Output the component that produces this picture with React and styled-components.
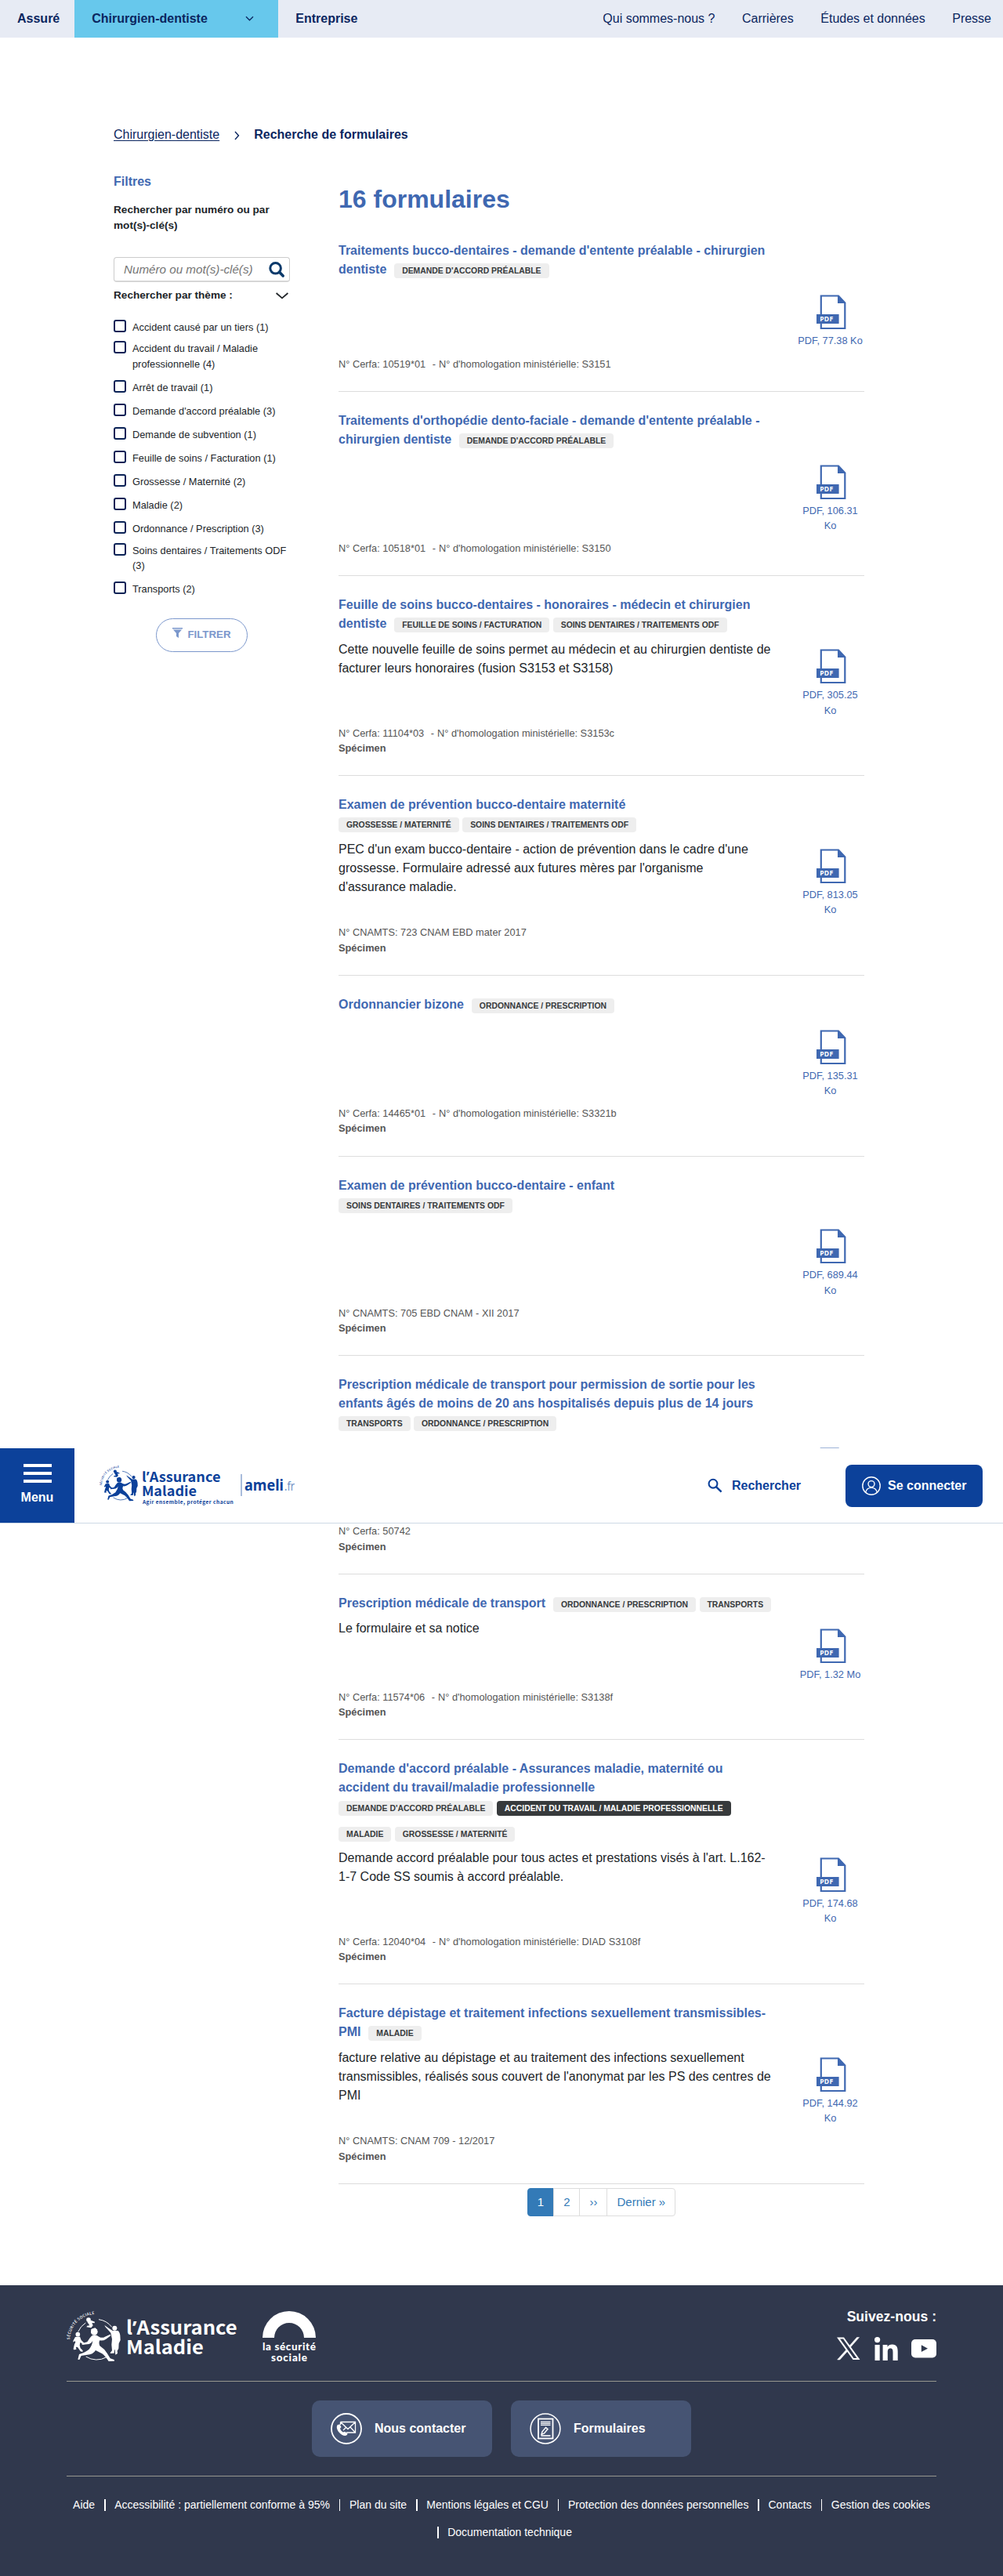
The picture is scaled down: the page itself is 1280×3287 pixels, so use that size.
import React from "react";
import styled, { createGlobalStyle, css } from "styled-components";

const Global = createGlobalStyle`
  * { box-sizing: border-box; }
  body { margin: 0; background: #fff; }
  body, input, button { font-family: "Liberation Sans", Arial, sans-serif; }
  h1, h2, p, ul { margin: 0; padding: 0; }
  ul { list-style: none; }
  a { color: inherit; text-decoration: none; }
  svg { display: block; flex: none; overflow: visible; }
`;

const Page = styled.div`
  position: relative;
  width: 1280px;
  height: 3287px;
  display: flex;
  flex-direction: column;
  color: #212529;
  font-size: 16px;
  line-height: 24px;
`;

/* ---------- top bar ---------- */
const TopBar = styled.nav`
  height: 48px;
  background: #e7ebf4;
  color: #0b2660;
  display: flex;
  align-items: stretch;
  justify-content: space-between;
  padding-right: 15px;
`;
const Audiences = styled.div`
  display: flex;
  font-weight: 700;
`;
const Audience = styled.a`
  display: flex;
  align-items: center;
  justify-content: space-between;
  padding: 0 22px 1px 22px;
  ${(p) =>
    p.$active &&
    css`
      width: 260px;
      padding-right: 31px;
      margin-left: -3px;
      background: #67c8ec;
    `}
`;
const SiteLinks = styled.div`
  display: flex;
  align-items: center;
  gap: 34.5px;
  padding-bottom: 1px;
`;

/* ---------- breadcrumb ---------- */
const Breadcrumb = styled.nav`
  margin: 112px 0 0 145px;
  height: 24px;
  display: flex;
  align-items: center;
  color: #0b2660;
`;
const CrumbLink = styled.a`
  text-decoration: underline;
  text-underline-offset: 2px;
`;
const CrumbCurrent = styled.strong``;
const CrumbArrow = styled.svg`
  margin: 2px 18px 0 19px;
`;

/* ---------- columns ---------- */
const Columns = styled.main`
  display: grid;
  grid-template-columns: 225px 671px;
  column-gap: 62px;
  margin: 36px 0 0 145px;
  flex: 1;
`;
const Sidebar = styled.aside`
  display: flex;
  flex-direction: column;
`;
const FilterTitle = styled.h2`
  font-size: 16px;
  color: #3f68b1;
`;
const FilterLabel = styled.p`
  font-size: 13.6px;
  line-height: 20.4px;
  font-weight: 700;
  margin-top: 14px;
`;
const SearchBox = styled.div`
  margin-top: 29.5px;
  height: 32px;
  display: flex;
  align-items: center;
  border: 1px solid #ccc;
  border-bottom-width: 2px;
  border-bottom-color: #d6d6d6;
  border-radius: 4px;
  padding-right: 6px;
`;
const SearchInput = styled.input`
  flex: 1;
  min-width: 0;
  border: 0;
  background: none;
  padding: 0 0 0 12px;
  font-size: 15.2px;
  font-style: italic;
  &::placeholder {
    color: #757575;
    opacity: 1;
  }
`;
const ThemeHead = styled.div`
  display: flex;
  align-items: center;
  justify-content: space-between;
  margin-top: 7px;
  padding-right: 2px;
  font-size: 13.6px;
  line-height: 20.4px;
  font-weight: 700;
`;
const ThemeList = styled.ul`
  margin-top: 14.5px;
`;
const Theme = styled.li`
  display: flex;
  gap: 8px;
  font-size: 12.8px;
  line-height: 19.2px;
  height: ${(p) => (p.$double ? "46.8px" : "30.1px")};
  padding-top: ${(p) => (p.$double ? "3px" : "5.5px")};
`;
const Check = styled.span`
  flex: none;
  width: 16px;
  height: 16px;
  border: 2px solid #0a2256;
  border-radius: 3px;
`;
const FilterButton = styled.button`
  align-self: center;
  display: flex;
  align-items: center;
  justify-content: center;
  gap: 6px;
  width: 117px;
  height: 43px;
  margin: 22px 0 0 0;
  padding: 0 0 2px;
  background: #fff;
  border: 1px solid #7b97cc;
  border-radius: 22px;
  color: #7b97cc;
  font-size: 13.3px;
  font-weight: 700;
`;
const Funnel = styled.svg`
  margin-bottom: 4px;
`;

/* ---------- results ---------- */
const Results = styled.section`
  padding-top: 15px;
`;
const Heading = styled.h1`
  font-size: 32px;
  line-height: 38.4px;
  color: #3f68b1;
  margin-bottom: 10px;
`;
const Item = styled.article`
  padding: 25px 0 25px;
  border-bottom: 1px solid #ddd;
`;
const ItemHead = styled.div`
  width: 558px;
`;
const ItemTitle = styled.h2`
  display: ${(p) => (p.$block ? "block" : "inline")};
  font-size: 16px;
  line-height: 24px;
  color: #3f68b1;
`;
const Tags = styled.span`
  display: inline-flex;
  flex-wrap: wrap;
  gap: 14px 4.4px;
  vertical-align: baseline;
  margin-left: 9.8px;
  ${(p) =>
    p.$below &&
    css`
      display: flex;
      margin-left: 0;
      padding: 4.1px 0 0.7px;
    `}
`;
const Tag = styled.span`
  height: 19px;
  line-height: 19px;
  padding: 0 10px;
  border-radius: 4px;
  font-size: 10.4px;
  font-weight: 700;
  white-space: nowrap;
  text-transform: uppercase;
  background: ${(p) => (p.$dark ? "#373a3c" : "#eee")};
  color: ${(p) => (p.$dark ? "#fff" : "#373a3c")};
`;
const ItemBody = styled.div`
  display: flex;
  justify-content: space-between;
`;
const Description = styled.p`
  width: 554px;
  padding-top: 8.6px;
`;
const Download = styled.a`
  width: 87px;
  min-height: ${(p) => (p.$tall ? "107.4px" : "0")};
  padding-top: 20px;
  display: flex;
  flex-direction: column;
  align-items: center;
  text-align: center;
  gap: 4px;
  color: #3f68b1;
  font-size: 12.8px;
  line-height: 19.2px;
`;
const FileIcon = styled.svg`
  margin-left: 2px;
`;
const Meta = styled.p`
  margin-top: 10px;
  font-size: 12.8px;
  line-height: 19.2px;
  color: #555;
`;
const Dash = styled.span`
  margin: 0 4.1px 0 8.5px;
`;
const Specimen = styled.p`
  font-size: 12.8px;
  line-height: 19.2px;
  font-weight: 700;
  color: #555;
`;
const Pagination = styled.nav`
  display: flex;
  justify-content: center;
  margin-top: 5px;
`;
const PageLink = styled.a`
  height: 36.5px;
  padding: 6px 12px;
  margin-left: -1px;
  border: 1px solid #ddd;
  font-size: 15px;
  line-height: 22.5px;
  color: #337ab7;
  &:first-child {
    margin-left: 0;
    border-radius: 4px 0 0 4px;
  }
  &:last-child {
    border-radius: 0 4px 4px 0;
  }
  ${(p) =>
    p.$current &&
    css`
      background: #337ab7;
      border-color: #337ab7;
      color: #fff;
    `}
`;

/* ---------- header stuck over the list ---------- */
const StickyHeader = styled.header`
  position: absolute;
  top: 1848px;
  left: 0;
  width: 1280px;
  height: 96px;
  background: #fff;
  border-bottom: 1px solid #cdd9e6;
  display: flex;
  color: #0c419a;
`;
const MenuButton = styled.div`
  width: 95px;
  background: #0c419a;
  color: #fff;
  font-weight: 700;
  display: flex;
  flex-direction: column;
  align-items: center;
  padding-top: 20px;
  gap: 6px;
`;
const MenuBar = styled.span`
  width: 36px;
  height: 4px;
  background: #fff;
`;
const MenuText = styled.span`
  margin-top: 0.5px;
`;
const Brand = styled.a`
  display: flex;
  margin: 21.3px 0 0 31.7px;
`;
const BrandDivider = styled.span`
  width: 2px;
  height: 28px;
  margin: 12px 3px 0 6.5px;
  background: #a9bcdc;
`;
const Ameli = styled.svg`
  margin-top: 10px;
`;
const HeaderActions = styled.div`
  margin-left: auto;
  margin-right: 26px;
  display: flex;
  gap: 57px;
`;
const SearchLink = styled.a`
  display: flex;
  align-items: center;
  gap: 12px;
  font-weight: 700;
`;
const Login = styled.a`
  align-self: flex-start;
  margin-top: 21px;
  width: 175px;
  height: 54px;
  display: flex;
  align-items: center;
  gap: 9px;
  padding-left: 21px;
  border-radius: 8px;
  background: #0c419a;
  color: #fff;
  font-weight: 700;
`;

/* ---------- footer ---------- */
const Footer = styled.footer`
  height: 371px;
  padding: 0 85px;
  background: #30384d;
  color: #fff;
`;
const FooterTop = styled.div`
  height: 123px;
  padding-top: 32px;
  display: flex;
  border-bottom: 1px solid #96978f;
`;
const SecuLogo = styled.svg`
  margin: 1px 0 0 30px;
`;
const Social = styled.div`
  margin: -5px 0 0 auto;
  text-align: right;
  font-size: 17.6px;
  font-weight: 700;
  line-height: 26px;
`;
const SocialIcons = styled.div`
  display: flex;
  justify-content: flex-end;
  align-items: center;
  gap: 17px;
  margin-top: 13px;
`;
const FooterActions = styled.div`
  height: 121px;
  padding-top: 24px;
  display: flex;
  justify-content: center;
  gap: 24px;
  border-bottom: 1px solid #96978f;
`;
const FooterButton = styled.a`
  width: 230px;
  height: 72px;
  border-radius: 10px;
  background: #465473;
  display: flex;
  align-items: center;
  gap: 16px;
  padding-left: 24px;
  font-weight: 700;
`;
const Legal = styled.ul`
  display: flex;
  flex-wrap: wrap;
  justify-content: center;
  column-gap: 4px;
  padding-top: 19px;
  font-size: 14px;
  line-height: 35px;
`;
const LegalItem = styled.li`
  display: flex;
  align-items: center;
  & + &::before {
    content: "";
    width: 1.5px;
    height: 15px;
    margin: 0 11.6px 1px 8px;
    background: #fff;
  }
`;

const sans = '"Noto Sans CJK SC", "Noto Sans", sans-serif';

function AssuranceLogo({ color, id, tagline }) {
  const w = tagline ? 735 : 660;
  const h = tagline ? 224 : 198;
  const k = tagline ? 0.2367 : 1 / 3;
  return (
    <svg width={w * k} height={h * k} viewBox={`45 54 ${w} ${h}`} fill={color}>
      <defs>
        <path id={id} d="M57 166 A100 100 0 0 1 157 69" />
      </defs>
      <text fontFamily={sans} fontWeight="500" fontSize="14.5">
        <textPath href={`#${id}`} textLength="148">SÉCURITÉ SOCIALE</textPath>
      </text>
      <g fill="none" stroke={color} strokeWidth="3">
        <path d="M89 136 A76 76 0 0 1 118 102" />
        <path d="M168 89 A76 76 0 0 1 218 118" />
        <path d="M119 231 A76 76 0 0 0 198 233" />
      </g>
      <circle cx="129" cy="90" r="8.5" />
      <path d="M124 98 L138 92 L153 98 L152 103 L142 102 L146 112 L139 121 L121 118 L124 113 L133 112 Z" />
      <circle cx="88" cy="146" r="8.5" />
      <path d="M78 156 L96 155 L101 168 L114 181 L111 185 L97 177 L95 188 L98 199 L107 208 L106 213 L98 211 L87 195 L81 194 L82 204 L72 205 L71 201 L75 184 L79 176 L76 171 L71 176 L70 171 Z" />
      <circle cx="229" cy="122" r="9" />
      <path d="M190 111 L206 122 L221 132 L241 132 Q248 136 250 150 L251 168 L245 181 L244 200 L239 209 L240 219 L232 224 L230 205 L228 205 L227 218 L212 219 L213 215 L219 208 L217 185 L219 164 L214 140 L193 117 Z" />
      <ellipse cx="151" cy="136" rx="13" ry="13" />
      <path d="M139 126 L154 121 L162 128 L148 132 L147 146 L139 142 Z" />
      <path d="M142 151 Q156 145 169 155 Q181 162 192 155 L212 146 L214 151 L196 164 Q184 172 172 169 Q167 178 172 190 Q190 202 200 218 L212 238 L227 243 L228 248 L206 249 Q192 228 181 220 L156 207 Q146 224 124 224 L101 228 L94 243 L88 242 L93 222 Q118 214 131 203 Q144 186 145 170 Q139 183 124 184 L104 186 L104 181 L124 175 Q134 158 142 151 Z" />
      <text x="273" y="148" fontFamily={sans} fontWeight="700" fontSize="72" textLength="425" lengthAdjust="spacingAndGlyphs">
        l<tspan fontFamily='"Noto Sans", sans-serif'>’</tspan>Assurance
      </text>
      <text x="273" y="223" fontFamily={sans} fontWeight="700" fontSize="72" textLength="296" lengthAdjust="spacingAndGlyphs">
        Maladie
      </text>
      {tagline && (
        <text x="277" y="265" fontFamily={sans} fontWeight="600" fontSize="28" textLength="490" lengthAdjust="spacing">
          {tagline}
        </text>
      )}
    </svg>
  );
}

const PdfIcon = () => (
  <FileIcon width="38" height="45" viewBox="0 0 38 45">
    <path d="M5.8 1.5 H28 L36.3 10.5 V43 H5.8 Z" fill="#fff" stroke="#3f68b1" strokeWidth="2.2" />
    <path d="M27 1 L37.4 11 H27 Z" fill="#3f68b1" />
    <rect x="0" y="25" width="28.6" height="12" fill="#3f68b1" />
    <text x="4.2" y="34.2" fill="#fff" fontFamily='"Noto Sans", sans-serif' fontWeight="700" fontSize="8.6" textLength="17">
      PDF
    </text>
  </FileIcon>
);

const forms = [
  {
    title: "Traitements bucco-dentaires - demande d'entente préalable - chirurgien dentiste",
    tags: ["Demande d'accord préalable"],
    size: "PDF, 77.38 Ko",
    meta: ["N° Cerfa: 10519*01", "N° d'homologation ministérielle: S3151"],
  },
  {
    title: "Traitements d'orthopédie dento-faciale - demande d'entente préalable - chirurgien dentiste",
    tags: ["Demande d'accord préalable"],
    size: "PDF, 106.31 Ko",
    meta: ["N° Cerfa: 10518*01", "N° d'homologation ministérielle: S3150"],
  },
  {
    title: "Feuille de soins bucco-dentaires - honoraires - médecin et chirurgien dentiste",
    tags: ["Feuille de soins / Facturation", "Soins dentaires / Traitements ODF"],
    text: "Cette nouvelle feuille de soins permet au médecin et au chirurgien dentiste de facturer leurs honoraires (fusion S3153 et S3158)",
    size: "PDF, 305.25 Ko",
    meta: ["N° Cerfa: 11104*03", "N° d'homologation ministérielle: S3153c"],
    specimen: true,
  },
  {
    title: "Examen de prévention bucco-dentaire maternité",
    below: true,
    tags: ["Grossesse / Maternité", "Soins dentaires / Traitements ODF"],
    text: "PEC d'un exam bucco-dentaire - action de prévention dans le cadre d'une grossesse. Formulaire adressé aux futures mères par l'organisme d'assurance maladie.",
    size: "PDF, 813.05 Ko",
    meta: ["N° CNAMTS: 723 CNAM EBD mater 2017"],
    specimen: true,
  },
  {
    title: "Ordonnancier bizone",
    tags: ["Ordonnance / Prescription"],
    size: "PDF, 135.31 Ko",
    meta: ["N° Cerfa: 14465*01", "N° d'homologation ministérielle: S3321b"],
    specimen: true,
  },
  {
    title: "Examen de prévention bucco-dentaire - enfant",
    below: true,
    tags: ["Soins dentaires / Traitements ODF"],
    size: "PDF, 689.44 Ko",
    meta: ["N° CNAMTS: 705 EBD CNAM - XII 2017"],
    specimen: true,
  },
  {
    title: "Prescription médicale de transport pour permission de sortie pour les enfants âgés de moins de 20 ans hospitalisés depuis plus de 14 jours",
    below: true,
    tags: ["Transports", "Ordonnance / Prescription"],
    meta: ["N° Cerfa: 50742"],
    specimen: true,
  },
  {
    title: "Prescription médicale de transport",
    tags: ["Ordonnance / Prescription", "Transports"],
    text: "Le formulaire et sa notice",
    size: "PDF, 1.32 Mo",
    meta: ["N° Cerfa: 11574*06", "N° d'homologation ministérielle: S3138f"],
    specimen: true,
  },
  {
    title: "Demande d'accord préalable - Assurances maladie, maternité ou accident du travail/maladie professionnelle",
    below: true,
    tags: ["Demande d'accord préalable", "*Accident du travail / Maladie professionnelle", "Maladie", "Grossesse / Maternité"],
    text: "Demande accord préalable pour tous actes et prestations visés à l'art. L.162-1-7 Code SS soumis à accord préalable.",
    size: "PDF, 174.68 Ko",
    meta: ["N° Cerfa: 12040*04", "N° d'homologation ministérielle: DIAD S3108f"],
    specimen: true,
  },
  {
    title: "Facture dépistage et traitement infections sexuellement transmissibles-PMI",
    tags: ["Maladie"],
    text: "facture relative au dépistage et au traitement des infections sexuellement transmissibles, réalisés sous couvert de l'anonymat par les PS des centres de PMI",
    size: "PDF, 144.92 Ko",
    meta: ["N° CNAMTS: CNAM 709 - 12/2017"],
    specimen: true,
  },
];

const themes = [
  ["Accident causé par un tiers (1)"],
  ["Accident du travail / Maladie professionnelle (4)", true],
  ["Arrêt de travail (1)"],
  ["Demande d'accord préalable (3)"],
  ["Demande de subvention (1)"],
  ["Feuille de soins / Facturation (1)"],
  ["Grossesse / Maternité (2)"],
  ["Maladie (2)"],
  ["Ordonnance / Prescription (3)"],
  ["Soins dentaires / Traitements ODF (3)", true],
  ["Transports (2)"],
];

const legal = [
  "Aide",
  "Accessibilité : partiellement conforme à 95%",
  "Plan du site",
  "Mentions légales et CGU",
  "Protection des données personnelles",
  "Contacts",
  "Gestion des cookies",
  "Documentation technique",
];

function FormItem({ form }) {
  return (
    <Item>
      <ItemHead>
        <ItemTitle $block={form.below}>{form.title}</ItemTitle>
        <Tags $below={form.below}>
          {form.tags.map((t) => (
            <Tag key={t} $dark={t[0] === "*"}>
              {t.replace("*", "")}
            </Tag>
          ))}
        </Tags>
      </ItemHead>
      <ItemBody>
        <Description>{form.text}</Description>
        <Download $tall={!form.size}>
          <PdfIcon />
          {form.size}
        </Download>
      </ItemBody>
      <Meta>
        {form.meta[0]}
        {form.meta[1] && (
          <>
            <Dash>-</Dash>
            {form.meta[1]}
          </>
        )}
      </Meta>
      {form.specimen && <Specimen>Spécimen</Specimen>}
    </Item>
  );
}

export default function App() {
  return (
    <Page>
      <Global />
      <TopBar>
        <Audiences>
          <Audience>Assuré</Audience>
          <Audience $active>
            Chirurgien-dentiste
            <svg width="11" height="7" viewBox="0 0 11 7" fill="none" stroke="#0b2660" strokeWidth="1.3">
              <path d="M1 1.2 L5.5 5.8 L10 1.2" />
            </svg>
          </Audience>
          <Audience>Entreprise</Audience>
        </Audiences>
        <SiteLinks>
          <a>Qui sommes-nous ?</a>
          <a>Carrières</a>
          <a>Études et données</a>
          <a>Presse</a>
        </SiteLinks>
      </TopBar>

      <Breadcrumb>
        <CrumbLink>Chirurgien-dentiste</CrumbLink>
        <CrumbArrow width="7" height="12" viewBox="0 0 7 12" fill="none" stroke="#0b2660" strokeWidth="1.4">
          <path d="M1 1 L5.5 6 L1 11" />
        </CrumbArrow>
        <CrumbCurrent>Recherche de formulaires</CrumbCurrent>
      </Breadcrumb>

      <Columns>
        <Sidebar>
          <FilterTitle>Filtres</FilterTitle>
          <FilterLabel>Rechercher par numéro ou par mot(s)-clé(s)</FilterLabel>
          <SearchBox>
            <SearchInput placeholder="Numéro ou mot(s)-clé(s)" />
            <svg width="20" height="20" viewBox="0 0 20 20" fill="none" stroke="#0b3a6b">
              <circle cx="8.6" cy="8.3" r="6.8" strokeWidth="3" />
              <path d="M13.6 13.3 L18.2 18" strokeWidth="3.6" strokeLinecap="round" />
            </svg>
          </SearchBox>
          <ThemeHead>
            Rechercher par thème :
            <svg width="16" height="9" viewBox="0 0 16 9" fill="none" stroke="#212529" strokeWidth="1.8">
              <path d="M0.6 1 L8 7.4 L15.4 1" />
            </svg>
          </ThemeHead>
          <ThemeList>
            {themes.map(([label, double]) => (
              <Theme key={label} $double={double}>
                <Check />
                <span>{label}</span>
              </Theme>
            ))}
          </ThemeList>
          <FilterButton>
            <Funnel width="13" height="13" viewBox="0 0 13 13" fill="#7b97cc">
              <path d="M0 0 H13 V1.6 H0 Z M1 2.6 H12 L8 7 V13 L5 11 V7 Z" />
            </Funnel>
            FILTRER
          </FilterButton>
        </Sidebar>

        <Results>
          <Heading>16 formulaires</Heading>
          {forms.map((f) => (
            <FormItem key={f.title} form={f} />
          ))}
          <Pagination>
            <PageLink $current>1</PageLink>
            <PageLink>2</PageLink>
            <PageLink>››</PageLink>
            <PageLink>Dernier »</PageLink>
          </Pagination>
        </Results>
      </Columns>

      <Footer>
        <FooterTop>
          <AssuranceLogo id="footer-arc" color="#fff" />
          <SecuLogo width="70" height="66" viewBox="0 0 70 66" fill="#fff">
            <path d="M0 34 A34 34 0 0 1 68 34 H53 A19 19 0 0 0 15 34 Z" />
            <text x="0" y="50" fontFamily="Lato, sans-serif" fontWeight="900" fontSize="13.5" textLength="68">
              la sécurité
            </text>
            <text x="11" y="63.5" fontFamily="Lato, sans-serif" fontWeight="900" fontSize="13.5" textLength="46">
              sociale
            </text>
          </SecuLogo>
          <Social>
            Suivez-nous :
            <SocialIcons>
              <svg width="32" height="30" viewBox="0 0 32 30">
                <path d="M1 0.5 H10 L30.5 29 H21.5 Z M5 2.5 L22.5 27 H26.5 L9 2.5 Z" fill="#fff" fillRule="evenodd" />
                <path d="M26.5 0.5 H29.5 L18 13.5 L16.8 11.5 Z M13.2 16 L14.8 18 L4.8 29 H1.6 Z" fill="#fff" stroke="#fff" strokeWidth="0.5" />
              </svg>
              <svg width="30" height="30" viewBox="0 0 30 30" fill="#fff">
                <circle cx="3.6" cy="3.6" r="3.6" />
                <path d="M0.5 10 H6.7 V30 H0.5 Z M10.6 10 H16.5 V12.7 C17.8 10.6 20 9.5 22.6 9.5 C28.2 9.5 29.7 13.2 29.7 18.4 V30 H23.5 V19.7 C23.5 17 23.2 14.6 20.3 14.6 C17.4 14.6 16.8 16.8 16.8 19.5 V30 H10.6 Z" />
              </svg>
              <svg width="32" height="24" viewBox="0 0 32 24">
                <rect width="32" height="23.5" rx="5" fill="#fff" />
                <path d="M12.8 7.3 L21 11.7 L12.8 16.1 Z" fill="#30384d" />
              </svg>
            </SocialIcons>
          </Social>
        </FooterTop>
        <FooterActions>
          <FooterButton>
            <svg width="40" height="40" viewBox="0 0 40 40" fill="none" stroke="#fff">
              <circle cx="20" cy="20" r="19" strokeWidth="1.8" />
              <path d="M12.5 11.5 H31.5 V25 H20 M12.5 11.5 V15 M12.5 11.5 L22 20.5 L31.5 11.5 M31.5 25 L25 18 M16 22 L19.5 18.5" strokeWidth="1.3" />
              <path d="M9 15 C6.8 17 7.8 21.5 11 25 C14.5 28.8 18.5 30 20.8 28 L21.6 26.6 L18.2 23.8 L15.8 24.6 C14 23.6 12.4 21.4 12 19.8 L13.5 18 L11.8 14.4 Z" fill="#fff" stroke="none" />
            </svg>
            Nous contacter
          </FooterButton>
          <FooterButton>
            <svg width="40" height="40" viewBox="0 0 40 40" fill="none" stroke="#fff">
              <circle cx="20" cy="20" r="18.9" strokeWidth="1.5" />
              <rect x="11" y="7.5" width="18.5" height="25" strokeWidth="1.8" />
              <path d="M14 11.3 H26.5 M14 13.3 H26.5 M14 15.3 H26.5" strokeWidth="1.2" />
              <path d="M14.5 29 H26.5" strokeWidth="1.6" />
              <path d="M15 27.5 L16 23.8 L20.5 18.5 L23 20.6 L18.5 26 Z" strokeWidth="1.5" />
            </svg>
            Formulaires
          </FooterButton>
        </FooterActions>
        <Legal>
          {legal.map((l) => (
            <LegalItem key={l}>{l}</LegalItem>
          ))}
        </Legal>
      </Footer>

      <StickyHeader>
        <MenuButton>
          <MenuBar />
          <MenuBar />
          <MenuBar />
          <MenuText>Menu</MenuText>
        </MenuButton>
        <Brand>
          <AssuranceLogo id="header-arc" color="#0c419a" tagline="Agir ensemble, protéger chacun" />
          <BrandDivider />
          <Ameli width="70" height="30" viewBox="0 0 70 30">
            <text x="0" y="22.7" fontFamily='"Noto Sans", sans-serif' fontWeight="700" fontSize="20" fill="#0c419a" textLength="50" lengthAdjust="spacingAndGlyphs">
              ameli
            </text>
            <text x="51" y="22.7" fontFamily='"Noto Sans", sans-serif' fontSize="15.5" fill="#6e8fc4" textLength="13" lengthAdjust="spacingAndGlyphs">
              .fr
            </text>
          </Ameli>
        </Brand>
        <HeaderActions>
          <SearchLink>
            <svg width="19" height="19" viewBox="0 0 19 19" fill="none" stroke="#0c419a" strokeWidth="2.1">
              <circle cx="7" cy="7.2" r="5.4" />
              <path d="M10.8 11.2 L17.6 17.6" strokeWidth="2.5" />
            </svg>
            Rechercher
          </SearchLink>
          <Login>
            <svg width="24" height="24" viewBox="0 0 24 24" fill="none" stroke="#fff" strokeWidth="1.4">
              <circle cx="12" cy="12" r="11.2" />
              <circle cx="12" cy="9.6" r="4" />
              <path d="M4.6 20.3 C5.6 16.4 8.4 14.4 12 14.4 C15.6 14.4 18.4 16.4 19.4 20.3" />
            </svg>
            Se connecter
          </Login>
        </HeaderActions>
      </StickyHeader>
    </Page>
  );
}
